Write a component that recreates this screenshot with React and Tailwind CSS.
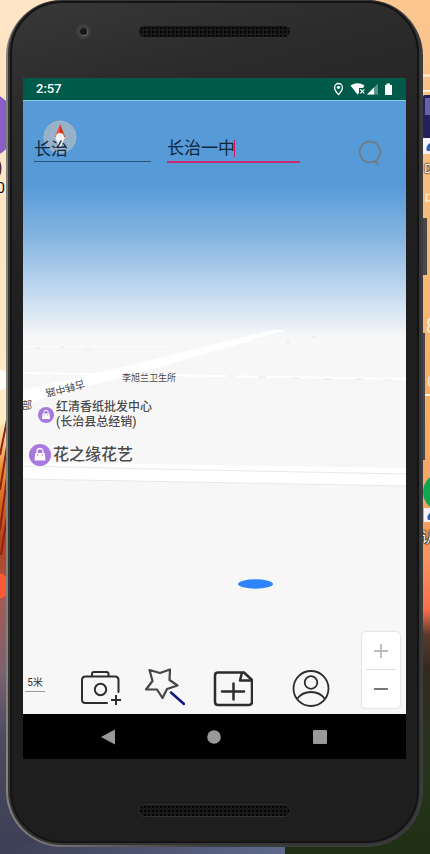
import React from "react";

const fonts = "font-[Roboto,'Noto_Sans_CJK_SC',sans-serif]";

function Wallpaper() {
  return (
    <div aria-hidden="true" className="absolute inset-0 overflow-hidden">
      <div className="absolute inset-y-0 left-0 w-1/2 bg-[linear-gradient(to_bottom,#ffe4c6_0px,#fde6c4_330px,#fff0c4_420px,#ef8a2c_470px,#b8401c_540px,#a45a55_600px,#7d6270_670px,#4a4a60_740px,#3c3f55_854px)]" />
      <div className="absolute inset-y-0 right-0 w-1/2 bg-[linear-gradient(to_bottom,#fbc690_0px,#f6b871_300px,#f5a561_500px,#f8935c_560px,#fb6d4a_610px,#5a3a2c_635px,#33291f_670px,#26351b_760px,#1f3015_854px)]" />
      <div className="absolute bottom-0 left-0 h-3 w-[285px] bg-gradient-to-r from-[#3c3f55] to-[#5f6a8c]" />
      <svg className="absolute left-0 top-0 h-[854px] w-[10px]" viewBox="0 0 10 854">
        <circle cx="-18" cy="125" r="34" fill="#8a5cc4" />
        <path d="M0 161 Q3 168 0 176Z" fill="#503040" />
        <circle cx="-2" cy="380" r="11" fill="#fff" opacity=".8" />
        <path d="M8 415 Q3 440 0 455 M8 440 L0 490 M8 470 L0 530 M8 510 L1 555" stroke="#8c2410" strokeWidth="2" fill="none" />
        <circle cx="-3" cy="586" r="13" fill="#fb5a34" />
      </svg>
      <span className="absolute left-[-3px] top-[180px] text-sm leading-4 text-black [text-shadow:0_0_2px_white]">0</span>
      <svg className="absolute right-0 top-0 h-[854px] w-[10px]" viewBox="0 0 10 854">
        <path d="M0 75.500H10M0 91H10M3 395H10" stroke="#fff3df" strokeWidth="2" />
        <rect x="3" y="95" width="12" height="44" rx="2" fill="#23215c" />
        <rect x="5" y="98" width="8" height="17" fill="#6663a8" />
        <rect x="3" y="138" width="9" height="16" fill="#f4f4fa" />
        <path d="M10 143Q5 146 7 151H10Z" fill="#2e62ad" />
        <circle cx="22" cy="492" r="19" fill="#0ea650" />
        <rect x="4" y="508" width="8" height="14" fill="#f4f4fa" />
        <path d="M10 513Q6 516 8 520H10Z" fill="#2e62ad" />
      </svg>
      <span className="absolute right-[-2px] top-[161px] text-xs leading-4 text-white [text-shadow:0_0_2px_black,0_0_2px_black]">D</span>
      <span className="absolute right-[-12px] top-[190px] text-lg leading-5 text-[#fff0d8]">中</span>
      <span className="absolute right-[-7px] top-[316px] text-xl leading-5 text-[#fff0d8]">8</span>
      <span className="absolute right-[-5px] top-[374px] text-sm leading-4 text-[#fff0d8]">0</span>
      <span className="absolute right-[-5px] top-[529px] text-sm leading-4 text-white [text-shadow:0_0_2px_black,0_0_2px_black,0_0_2px_black]">认</span>
    </div>
  );
}

function Speaker() {
  return <div className="h-[13px] w-[153px] rounded-full border border-[#303030] bg-[#181818] bg-[radial-gradient(#050505_1px,transparent_1px)] bg-[size:4px_4px]" />;
}

function StatusBar() {
  return (
    <div className="flex h-[23px] items-center border-b border-[#8fcbe0] bg-[#005a4a] px-[13px] text-white">
      <span className="text-[13px] font-medium leading-5">2:57</span>
      <svg className="ml-auto" width="60" height="14" viewBox="0 0 60 14" fill="#fff">
        <path d="M5.500 1.500a3.900 3.900 0 0 0-3.900 3.900c0 2.900 3.900 7.100 3.900 7.100s3.900-4.200 3.900-7.100a3.900 3.900 0 0 0-3.900-3.900Z" fill="none" stroke="#fff" strokeWidth="1.300" />
        <circle cx="5.500" cy="5.300" r="1.600" />
        <path d="M17.500 3.500Q24.500-.8 31.500 3.500L30 6H26V11L24.500 12.500Z" />
        <path d="M27.300 7.300l4 4m0-4l-4 4" stroke="#fff" strokeWidth="1.200" />
        <path d="M45 1.500V12.500H34Z" opacity=".35" />
        <path d="M41 5.500V12.500H34Z" />
        <path d="M53.500 1.500h3.500V3H59v10h-7V3h1.500Z" />
      </svg>
    </div>
  );
}

function MapCanvas() {
  return (
    <svg aria-hidden="true" className="absolute inset-0 h-full w-full" viewBox="0 0 383 613" preserveAspectRatio="none">
      <defs>
        <linearGradient id="sky" gradientUnits="userSpaceOnUse" x1="0" y1="84" x2="0" y2="236">
          <stop offset="0" stopColor="#579ad8" />
          <stop offset=".35" stopColor="#86b5e1" />
          <stop offset=".8" stopColor="#d3e3f3" />
          <stop offset="1" stopColor="#f7f7f7" />
        </linearGradient>
      </defs>
      <rect width="383" height="613" fill="#f7f7f7" />
      <rect width="383" height="236" fill="url(#sky)" />
      <path d="M0 245.500H150M210 241H383" stroke="#fbfbfb" strokeWidth="1" />
      <path d="M0 272L192 275L383 278" stroke="#fff" strokeWidth="2" fill="none" />
      <path d="M13 247h4m20 -1h4m22 2h4M205 241h4m25 -8h5m24 8h4m22 -5h4M203 275h8m24 1h8m25 1h8m24 1h8m24 0h8m22 1h8" stroke="#e6e6e6" strokeWidth="1" />
      <path d="M0 289L100 266L192 243L250 229L263 229L192 250L115 272L0 303Z" fill="#fff" />
      <path d="M0 361L383 367V385L0 378Z" fill="#fff" />
      <path d="M0 365L130 368L383 373M0 378L383 385" stroke="#e8e8e8" strokeWidth="1" fill="none" />
      <ellipse cx="232.500" cy="483" rx="17.500" ry="4.700" fill="#2f83fb" />
    </svg>
  );
}

function ShopPin({ className }) {
  return (
    <svg className={className} viewBox="0 0 22 22">
      <circle cx="11" cy="11" r="11" fill="#a779df" />
      <path d="M6.300 9h9.400l.8 7.500h-11Z" fill="#fff" />
      <path d="M8 9V7.500a3 3 0 0 1 6 0V9" fill="none" stroke="#fff" strokeWidth="1.300" />
      <circle cx="8.700" cy="11" r=".8" fill="#a779df" />
      <circle cx="13.300" cy="11" r=".8" fill="#a779df" />
    </svg>
  );
}

function MapLabels() {
  return (
    <div className="absolute inset-0 overflow-hidden text-[#4a4a4a] [text-shadow:0_0_2px_white]">
      <span className="absolute left-[22px] top-[279px] rotate-[166deg] text-[10px] leading-4">古韩中路</span>
      <span className="absolute left-[99px] top-[269px] text-[9px] leading-4">李旭兰卫生所</span>
      <span className="absolute left-[-1px] top-[297px] text-[10px] leading-4">部</span>
      <div className="absolute left-[15px] top-[299px] flex items-center">
        <ShopPin className="h-4 w-4" />
        <span className="ml-[2px] whitespace-nowrap text-xs font-medium leading-[15px]">
          红清香纸批发中心
          <br />
          (长治县总经销)
        </span>
      </div>
      <div className="absolute left-[6px] top-[343px] flex items-center">
        <ShopPin className="h-[22px] w-[22px]" />
        <span className="ml-[2px] whitespace-nowrap text-base font-medium leading-5">花之缘花艺</span>
      </div>
      <svg className="absolute left-5 top-[19px] h-[34px] w-[34px]" viewBox="0 0 34 34">
        <circle cx="17" cy="17" r="16" fill="#b9bdc0" fillOpacity=".65" stroke="#a5b7c8" strokeWidth="1" />
        <path d="M17 4L12 17H17Z" fill="#f0513a" />
        <path d="M17 4L22 17H17Z" fill="#cf2c18" />
        <path d="M12 17H22L17 29Z" fill="#eceff2" />
        <circle cx="17" cy="17" r="4" fill="#f4f4f4" />
      </svg>
    </div>
  );
}

function SearchBar() {
  return (
    <form className="relative flex items-start pl-[11px] pr-6 pt-[35px]" onSubmit={(e) => e.preventDefault()}>
      <input aria-label="城市" defaultValue="长治" className="h-[26px] w-[117px] border-b border-[#2e5274] bg-transparent pb-[2px] text-[17px] text-[#10283e] outline-none" />
      <label className="ml-4 flex h-[27px] w-[133px] items-center border-b-2 border-[#cb2a70]">
        <input aria-label="地点" defaultValue="长治一中" className="h-6 w-[67px] bg-transparent text-[17px] text-[#10283e] outline-none" />
        <span className="h-[17px] w-px bg-[#d81b60]" />
      </label>
      <button type="submit" aria-label="搜索" className="ml-auto mt-1">
        <svg width="24" height="26" viewBox="0 0 24 26" fill="none" stroke="#737d86" strokeWidth="1.800">
          <circle cx="12" cy="12" r="10.300" />
          <path d="M17 20.500L20.500 25" strokeWidth="2.200" />
        </svg>
      </button>
    </form>
  );
}

const iconProps = { width: 40, height: 40, viewBox: "0 0 40 40", fill: "none", stroke: "#2d2d2f" };

function Toolbar() {
  return (
    <div className="relative mt-auto flex items-end pb-[6px] pl-[2px] pr-[6px]">
      <span className="mb-4 w-5 border-b border-[#999] text-center text-[10px] leading-4 text-[#333]">5米</span>
      <button aria-label="拍照" className="ml-9">
        <svg {...iconProps} strokeWidth="2" strokeLinecap="round">
          <path d="M26 35H4.500Q1 35 1 31.500V12Q1 8.500 4.500 8.500H34Q37.500 8.500 37.500 12V24" />
          <path d="M11 8V6Q11 4 13 4H25.500Q27.500 4 27.500 6V8" />
          <circle cx="19.500" cy="21.500" r="5.700" />
          <path d="M35 27V37M30 32H40" strokeLinecap="butt" />
        </svg>
      </button>
      <button aria-label="特效" className="ml-6">
        <svg {...iconProps} stroke="#454547" strokeWidth="2.200" strokeLinejoin="round">
          <path d="M4.500 2L15 5L25 1.500L24.500 12L32.500 17.500L22 21L17.500 30L12 21.500L1 21.500L7.500 13Z" />
          <path d="M26 24.500L39 36" stroke="#13187a" strokeWidth="2.500" strokeLinecap="round" />
        </svg>
      </button>
      <button aria-label="新建" className="ml-7">
        <svg {...iconProps} strokeWidth="2.500" strokeLinejoin="round">
          <path d="M31 4.500H5Q2 4.500 2 7.500V34Q2 37 5 37H36Q39 37 39 34V12Z" />
          <path d="M29 4.500L27 12.500H38" />
          <path d="M20.500 15.500V31.500M9 23.500H31" strokeLinecap="round" />
        </svg>
      </button>
      <button aria-label="我的" className="ml-[38px]">
        <svg {...iconProps} strokeWidth="1.800">
          <circle cx="20" cy="20.500" r="17.500" />
          <circle cx="20" cy="14.500" r="6.300" />
          <path d="M6 31Q11 24 20 24T34 31" />
        </svg>
      </button>
      <div className="ml-auto flex w-[38px] flex-col items-center rounded-sm bg-white shadow-[0_0_2px_#bbb]">
        <button aria-label="放大" className="flex h-[38px] w-[30px] items-center justify-center border-b border-[#ddd]">
          <svg width="16" height="16" viewBox="0 0 16 16" stroke="#bbb" strokeWidth="1.800"><path d="M8 1V15M1 8H15" /></svg>
        </button>
        <button aria-label="缩小" className="flex h-[38px] w-[30px] items-center justify-center">
          <svg width="16" height="16" viewBox="0 0 16 16" stroke="#777" strokeWidth="2"><path d="M1 8H15" /></svg>
        </button>
      </div>
    </div>
  );
}

function NavBar() {
  return (
    <nav className="flex h-[45px] items-center justify-center gap-[90px] bg-black pr-[2px]">
      <button aria-label="返回"><svg width="16" height="16" viewBox="0 0 16 16"><path d="M1 8L15 .5V15.500Z" fill="#999" /></svg></button>
      <button aria-label="主页"><svg width="16" height="16" viewBox="0 0 16 16"><circle cx="8" cy="8" r="6.800" fill="#999" /></svg></button>
      <button aria-label="最近任务"><svg width="16" height="16" viewBox="0 0 16 16"><rect x="1" y="1" width="14" height="14" rx="1" fill="#999" /></svg></button>
    </nav>
  );
}

export default function App() {
  return (
    <div className={"relative flex min-h-screen overflow-hidden pb-[7px] pl-[6px] pr-[7px] " + fonts}>
      <Wallpaper />
      <div className="relative flex flex-1 flex-col rounded-[56px] bg-gradient-to-r from-[#85827d] via-[#3c3c3c] to-[#3c3c40] px-[2px] pb-[2px]">
        <div aria-hidden="true" className="absolute -right-1 top-[218px] h-[57px] w-1 bg-[#4a4645]" />
        <div aria-hidden="true" className="absolute -right-[2px] top-[333px] h-[127px] w-[2px] bg-[#4a4645]" />
        <div className="relative flex flex-1 flex-col rounded-[54px] bg-[#363636] px-[2px] pb-[2px] pt-px">
          <div className="flex flex-1 flex-col rounded-[52px] border-2 border-[#141414] bg-[linear-gradient(165deg,#383838_0px,#2c2c2c_100px,#212121_260px,#1e1e1e_400px,#1e1e1e_100%)] px-[11px]">
            <header className="grid h-[75px] grid-cols-[1fr_auto_1fr] items-center pb-[18px]">
              <div className="ml-[53px] flex h-[15px] w-[15px] items-center justify-center rounded-full bg-[#404040]">
                <span className="h-2 w-2 rounded-full border-b border-r border-[#666] bg-[#171717]" />
              </div>
              <Speaker />
            </header>
            <div className="flex flex-1 flex-col">
              <StatusBar />
              <main className="relative flex flex-1 flex-col bg-[#f7f7f7]">
                <MapCanvas />
                <MapLabels />
                <SearchBar />
                <Toolbar />
              </main>
              <NavBar />
            </div>
            <footer className="flex h-[82px] items-center justify-center pt-5">
              <Speaker />
            </footer>
          </div>
        </div>
      </div>
    </div>
  );
}
